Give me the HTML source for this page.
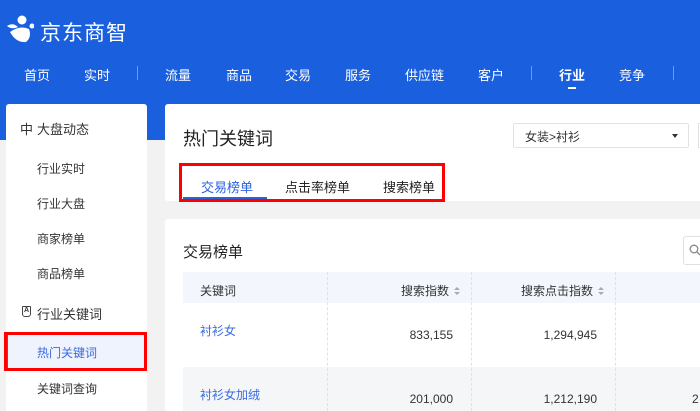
<!DOCTYPE html>
<html style="width:700px;height:411px;overflow:hidden"><head><meta charset="utf-8"><style>
*{margin:0;padding:0;box-sizing:border-box}
body{width:700px;height:411px;overflow:hidden;background:#f2f2f2;font-family:"Liberation Sans","Noto Sans CJK SC",sans-serif;position:relative;color:#333}
.a{position:absolute;white-space:nowrap}
.hdr{position:absolute;left:0;top:0;width:700px;height:140px;background:#1a5fde}
.nav{color:#fff;font-size:13px;top:65px}
.sep{position:absolute;top:66px;width:1px;height:14px;background:#6f9ae8}
.card{position:absolute;background:#fff;border-radius:3px}
.side{font-size:12px;color:#333}
.dash{position:absolute;top:272px;width:0;height:139px;border-left:1px dashed #dde2ea}
.num{font-size:12px;color:#333;text-align:right}
.sort{display:inline-block;width:6px;height:9px;margin-left:5px;vertical-align:-1px;position:relative}
.sort:before{content:"";position:absolute;left:0;top:0;border:3px solid transparent;border-bottom:3px solid #aaa;border-top:0}
.sort:after{content:"";position:absolute;left:0;top:5px;border:3px solid transparent;border-top:3px solid #aaa;border-bottom:0}
</style></head><body>
<div class="hdr"></div>
<svg class="a" style="left:6px;top:15px" width="28" height="28" viewBox="0 0 28 28">
<circle cx="16" cy="5" r="4.5" fill="#fff"/>
<path d="M1 11 Q7 7 12 12 Q6 15 1 11Z" fill="#fff"/>
<path d="M4 17 Q14 10 23 14 Q26 22 20 27 Q10 28 4 17Z" fill="#fff"/>
<circle cx="26" cy="11" r="2.5" fill="#fff"/>
</svg>
<div class="a" style="left:40px;top:17px;font-size:21px;color:#fff;letter-spacing:1px">京东商智</div>
<div class="a nav" style="left:24px">首页</div>
<div class="a nav" style="left:84px">实时</div>
<div class="sep" style="left:137px"></div>
<div class="a nav" style="left:165px">流量</div>
<div class="a nav" style="left:226px">商品</div>
<div class="a nav" style="left:285px">交易</div>
<div class="a nav" style="left:345px">服务</div>
<div class="a nav" style="left:405px">供应链</div>
<div class="a nav" style="left:478px">客户</div>
<div class="sep" style="left:531px"></div>
<div class="a nav" style="left:559px;font-weight:bold">行业</div>
<div class="a" style="left:568px;top:87px;width:8px;height:2px;background:#fff"></div>
<div class="a nav" style="left:619px">竞争</div>
<div class="sep" style="left:673px"></div>

<div class="card" style="left:6px;top:104px;width:141px;height:310px"></div>
<div class="a side" style="left:20px;top:119px;font-size:13px">中</div>
<div class="a side" style="left:37px;top:119px;font-size:13px">大盘动态</div>
<div class="a side" style="left:37px;top:160px">行业实时</div>
<div class="a side" style="left:37px;top:195px">行业大盘</div>
<div class="a side" style="left:37px;top:230px">商家榜单</div>
<div class="a side" style="left:37px;top:265px">商品榜单</div>
<div class="a" style="left:22px;top:306px;width:9px;height:11px;border:1.5px solid #444;border-radius:1px 1px 3px 3px;font-size:7px;line-height:8px;text-align:center;font-weight:bold">A</div>
<div class="a side" style="left:37px;top:304px;font-size:13px">行业关键词</div>
<div class="a" style="left:6px;top:334px;width:141px;height:35px;background:#eef3fd"></div>
<div class="a" style="left:6px;top:334px;width:2px;height:35px;background:#2a62de"></div>
<div class="a side" style="left:37px;top:344px;color:#3b6ae0">热门关键词</div>
<div class="a" style="left:4px;top:332px;width:143px;height:39px;border:3px solid #f00"></div>
<div class="a side" style="left:37px;top:380px">关键词查询</div>

<div class="card" style="left:165px;top:104px;width:540px;height:97px"></div>
<div class="a" style="left:183px;top:125px;font-size:18px;color:#222">热门关键词</div>
<div class="a" style="left:513px;top:123px;width:176px;height:25px;border:1px solid #e3e3e3;border-radius:2px"></div>
<div class="a" style="left:525px;top:128px;font-size:12px;color:#333">女装&gt;衬衫</div>
<div class="a" style="left:672px;top:134px;border:3.5px solid transparent;border-top:4px solid #333"></div>
<div class="a" style="left:698px;top:123px;width:10px;height:25px;border:1px solid #e3e3e3"></div>
<div class="a" style="left:201px;top:177px;font-size:13px;color:#2a62de">交易榜单</div>
<div class="a" style="left:183px;top:197px;width:84px;height:2px;background:#2a62de"></div>
<div class="a" style="left:285px;top:177px;font-size:13px;color:#222">点击率榜单</div>
<div class="a" style="left:383px;top:177px;font-size:13px;color:#222">搜索榜单</div>
<div class="a" style="left:179px;top:163px;width:266px;height:39px;border:3px solid #f00"></div>

<div class="card" style="left:165px;top:219px;width:540px;height:192px"></div>
<div class="a" style="left:183px;top:241px;font-size:15px;color:#222">交易榜单</div>
<div class="a" style="left:683px;top:236px;width:30px;height:29px;border:1px solid #e0e0e0;border-radius:3px"></div>
<svg class="a" style="left:689px;top:244px" width="12" height="12" viewBox="0 0 12 12"><circle cx="5" cy="5" r="3.8" fill="none" stroke="#888" stroke-width="1.3"/><path d="M8 8 L11 11" stroke="#888" stroke-width="1.3"/></svg>
<div class="a" style="left:183px;top:272px;width:520px;height:31px;background:#f3f6fc"></div>
<div class="a" style="left:183px;top:367px;width:520px;height:44px;background:#f5f6f8"></div>
<div class="dash" style="left:327px"></div>
<div class="dash" style="left:471px"></div>
<div class="dash" style="left:615px"></div>
<div class="a" style="left:200px;top:282px;font-size:12px;color:#333">关键词</div>
<div class="a num" style="right:240px;top:282px">搜索指数<span class="sort"></span></div>
<div class="a num" style="right:96px;top:282px">搜索点击指数<span class="sort"></span></div>
<div class="a" style="left:200px;top:322px;font-size:12px;color:#3b6ae0">衬衫女</div>
<div class="a num" style="right:247px;top:328px">833,155</div>
<div class="a num" style="right:103px;top:328px">1,294,945</div>
<div class="a" style="left:200px;top:386px;font-size:12px;color:#3b6ae0">衬衫女加绒</div>
<div class="a num" style="right:247px;top:392px">201,000</div>
<div class="a num" style="right:103px;top:392px">1,212,190</div>
<div class="a num" style="left:692px;top:392px">2</div>
</body></html>
